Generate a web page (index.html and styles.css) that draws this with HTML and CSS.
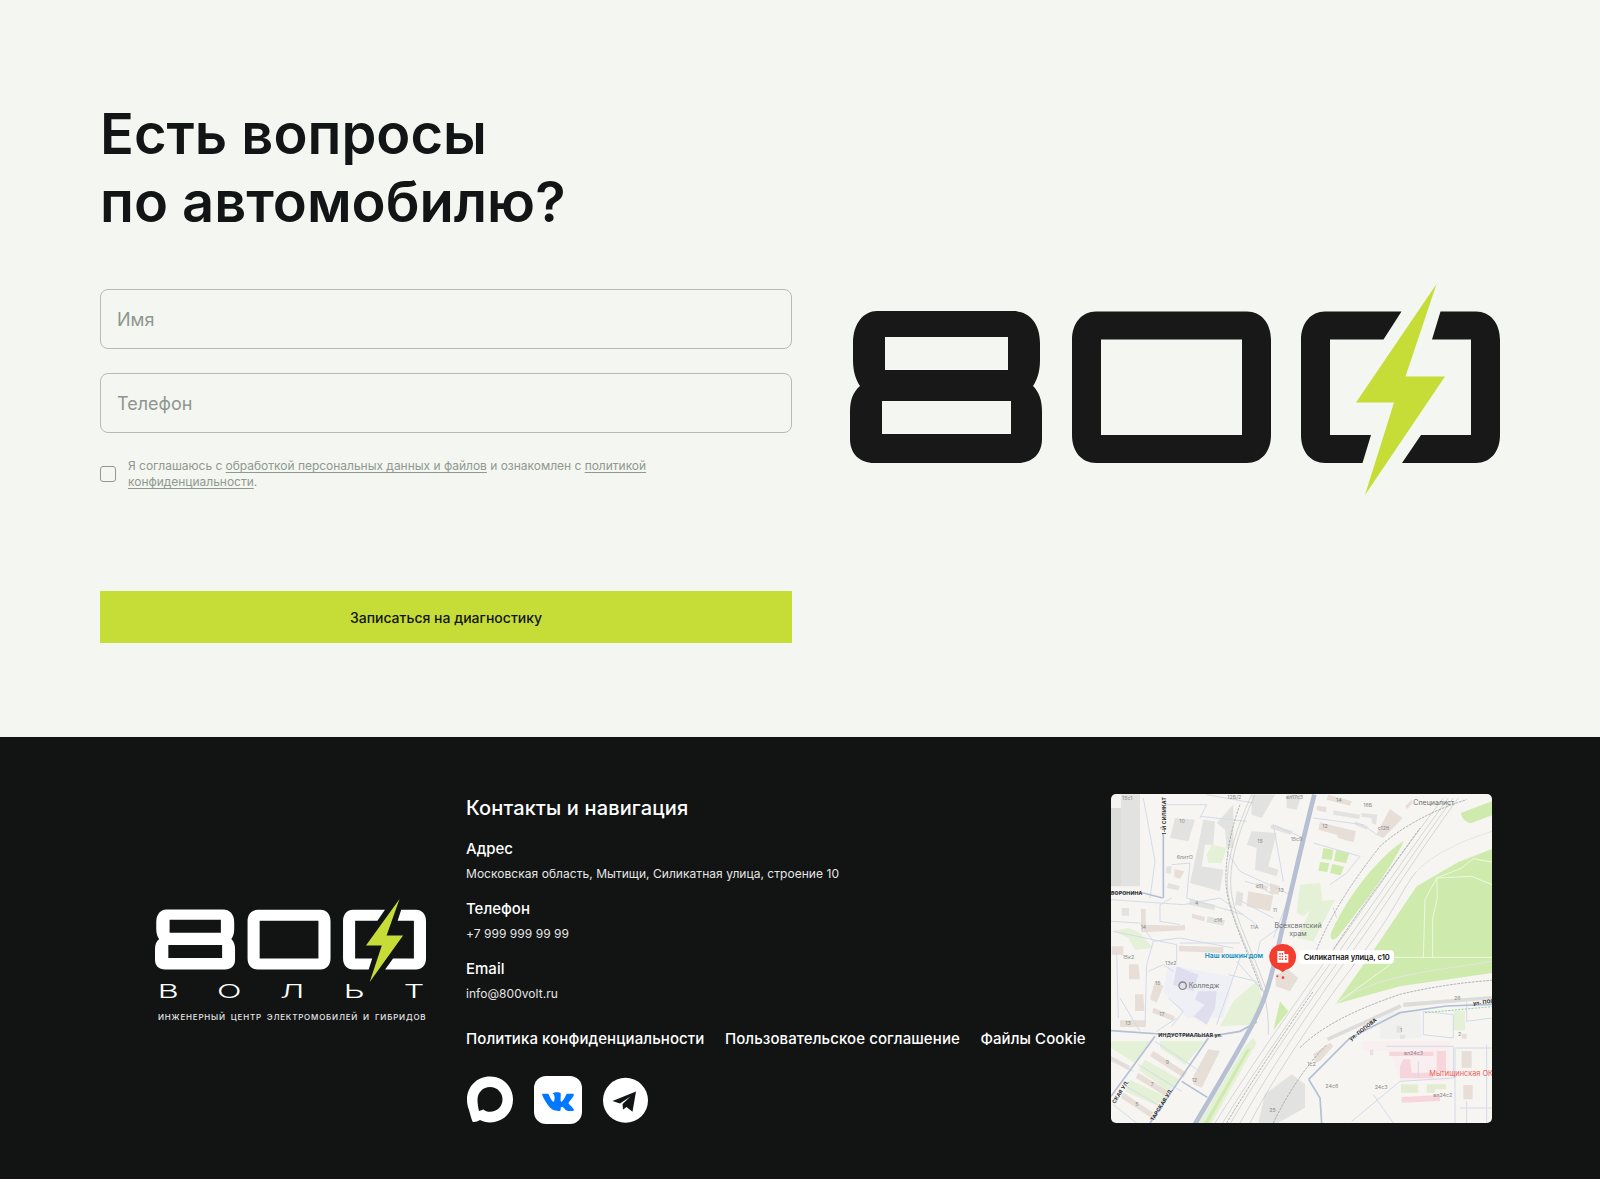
FILE: index.html
```html
<!DOCTYPE html>
<html lang="ru">
<head>
  <meta charset="UTF-8" />
  <meta name="viewport" content="width=device-width, initial-scale=1.0"/>
  <title>800 Вольт</title>
  <link rel="stylesheet" href="styles.css">
</head>
<body>

  <svg class="sprite" aria-hidden="true">
    <symbol id="logo800" viewBox="850 284 650 211" preserveAspectRatio="none">
      <path fill="currentColor" fill-rule="evenodd" d="M877 311H1013C1029 311 1040 323 1040 343V360C1040 372 1037 380 1033 386C1039 392 1042 400 1042 412V439C1042 454 1032 463 1018 463H874C860 463 850 454 850 439V412C850 400 853 392 860 386C856 380 853 372 853 360V343C853 323 864 311 877 311ZM885 337H1008V370H885ZM882 401H1011V434H882Z"/>
      <path fill="currentColor" fill-rule="evenodd" d="M1096 311.500H1247C1261 311.500 1271 323 1271 340V435C1271 452 1261 463 1247 463H1096C1082 463 1072 452 1072 435V340C1072 323 1082 311.500 1096 311.500ZM1101 339.500H1242V435H1101Z"/>
      <path fill="currentColor" d="M1325 311.500H1401.500L1383.500 339.500H1330V435H1371L1362.500 463H1325C1311 463 1301 452 1301 435V340C1301 323 1311 311.500 1325 311.500Z"/>
      <path fill="currentColor" d="M1440.500 311.500H1476C1490 311.500 1500 323 1500 340V435C1500 452 1490 463 1476 463H1402L1421 435H1471V339.500H1432Z"/>
      <path class="bolt" d="M1436.500 284L1405.500 376.500H1445L1365 495L1394 402.500H1356Z"/>
    </symbol>
  </svg>

  <section class="question">
    <div class="question-left">
      <h1>Есть вопросы<br>по автомобилю?</h1>
      <form class="form">
        <input type="text" placeholder="Имя">
        <input type="tel" placeholder="Телефон">
        <label class="agree">
          <span class="agree-box"></span>
          <span class="agree-text">Я соглашаюсь с <a href="#">обработкой персональных данных и файлов</a> и ознакомлен с <a href="#">политикой конфиденциальности</a>.</span>
        </label>
        <button type="button" class="submit-btn">Записаться на диагностику</button>
      </form>
    </div>
    <svg class="big-logo"><use href="#logo800"/></svg>
  </section>

  <footer class="footer">
    <div class="brand">
      <svg class="brand-logo"><use href="#logo800"/></svg>
      <div class="brand-word"><span>В</span><span>О</span><span>Л</span><span>Ь</span><span>Т</span></div>
      <div class="brand-tag">Инженерный центр электромобилей и гибридов</div>
    </div>

    <div class="info">
      <h3>Контакты и навигация</h3>
      <div class="info-group">
        <div class="info-label">Адрес</div>
        <div class="info-value">Московская область, Мытищи, Силикатная улица, строение 10</div>
      </div>
      <div class="info-group">
        <div class="info-label">Телефон</div>
        <div class="info-value">+7 999 999 99 99</div>
      </div>
      <div class="info-group">
        <div class="info-label">Email</div>
        <div class="info-value">info@800volt.ru</div>
      </div>
      <nav class="links">
        <a href="#">Политика конфиденциальности</a>
        <a href="#">Пользовательское соглашение</a>
        <a href="#">Файлы Cookie</a>
      </nav>
      <div class="socials">
        <svg viewBox="0 0 48 48"><path fill="#fff" fill-rule="evenodd" d="M24 .5C37 .5 47 10.500 47 23.500S37 46.500 24 46.500C20 46.500 17 45.500 14 44C11.500 45.500 7.500 46.800 6.500 45.500C5.500 43.500 4.500 39 3 34C1.500 30 1 27 1 23.500C1 10.500 11 .5 24 .5ZM24 11C17 11 11.500 16.500 11.500 23.500C11.500 27 12 31 13 35L17.500 33.500C19 35 21.500 35.800 24 35.800C31 35.800 36.500 30.500 36.500 23.500S31 11 24 11Z"/></svg>
        <svg viewBox="0 0 48 48"><rect width="48" height="48" rx="12" fill="#fff"/><path fill="#07f" transform="translate(8 9.700) scale(1.330)" d="M13.162 18.994c.609 0 .858-.406.851-.915-.031-1.917.714-2.949 2.059-1.604 1.488 1.488 1.796 2.519 3.603 2.519h3.2c.808 0 1.126-.26 1.126-.668 0-.863-1.421-2.386-2.625-3.504-1.686-1.565-1.765-1.602-.313-3.486 1.801-2.339 4.157-5.336 2.073-5.336h-3.981c-.772 0-.828.435-1.103 1.083-.995 2.347-2.886 5.387-3.604 4.922-.751-.485-.407-2.406-.35-5.261.015-.754.011-1.271-1.141-1.539-.629-.145-1.241-.205-1.809-.205-2.273 0-3.841.953-2.95 1.119 1.571.293 1.42 3.692 1.054 5.16-.638 2.556-3.036-2.024-4.035-4.305-.241-.548-.315-.974-1.175-.974h-3.255c-.492 0-.787.16-.787.516 0 .602 2.96 6.72 5.786 9.77 2.756 2.975 5.48 2.708 7.376 2.708z"/></svg>
        <svg viewBox="0 0 48 48"><circle cx="23.500" cy="24.300" r="22.500" fill="#fff"/><path fill="#121515" d="M10.500 25L34 15.500L30.500 35.800L24.500 31L21 33.500L20.500 28L28.500 20.500L18 27.500Z"/></svg>
      </div>
    </div>

    <svg class="map" viewBox="33 28 1143 987">
      <rect class="m-bg" x="33" y="28" width="1143" height="987"/>

      <!-- зелень -->
      <path class="m-green" d="M1176 193L1075 232L950 305L815 505L707 658L900 605L1176 565Z"/>
      <path class="m-green" d="M912 168C860 200 760 300 695 440C685 465 700 472 715 455C780 370 870 260 912 168Z"/>
      <path class="m-green" d="M1082 85L1176 50V92L1112 116C1095 112 1085 100 1082 85Z"/>
      <path class="m-green" d="M670 190L700 195L695 226L665 222ZM708 196L748 205L738 236L702 228ZM660 232L688 236L682 262L655 258ZM697 238L732 246L722 272L690 265Z"/>
      <path class="m-green-soft" d="M295 1015L435 785L460 760L470 775L335 1015Z"/>
      <path class="m-green" d="M312 1015L440 795L452 790L325 1015Z"/>
      <path class="m-green" d="M540 650L565 680L520 737Z"/>
      <path class="m-green-soft" d="M600 300L660 295L668 345L610 395L590 385ZM645 350L705 345L640 470L590 460Z"/>
      <path class="m-green-soft" d="M320 210L335 180L380 190L365 235L325 235Z"/>
      <path class="m-green-soft" d="M33 770H150L105 835L33 790ZM180 770H315L255 840L180 790ZM135 825L240 885L205 920L115 855ZM90 885L205 940L165 960L75 920Z"/>
      <path class="m-green-soft" d="M40 440L85 430L120 445L160 490L105 495L85 460ZM400 650L470 590L490 650L450 720L360 725Z"/>
      <path class="m-green-soft" d="M1062 679H1095V737H1062Z"/>

      <!-- кварталы -->
      <path class="m-college" d="M205 540L400 578L370 700L260 700L190 620Z"/>
      <path class="m-college2" d="M230 545L295 570L280 620L220 600ZM295 620L350 620L345 670L320 720L280 695L315 660L285 645Z"/>
      <path class="m-pink-soft" d="M790 769H1050V889H900L870 799H790Z"/>
      <path class="m-pink" d="M868 801H1000V814H868ZM1010 799H1038V859H1010ZM910 824H930L935 864H1000V881H900V844ZM905 937L1020 931V949L905 954Z"/>
      <path class="m-soft" d="M840 684L960 679L965 759L840 764Z"/>

      <!-- здания серые -->
      <path class="m-grey2" d="M33 70H63V305H33Z"/>
      <path class="m-grey" d="M63 29H120V305H63ZM225 100L285 105L265 170L210 160ZM310 105L345 110L340 180L315 180L305 245L370 255L360 320L270 295L295 180ZM350 115L400 60V190L380 190L375 135ZM455 140L530 145L505 245L535 255L530 275L465 255L470 190L440 180ZM455 30H525L485 100L455 90ZM515 120L580 140L570 150L510 130ZM560 30H605L590 75L560 70ZM270 343L345 360L343 377L267 360ZM323 395L375 407L370 423L320 413ZM200 245H215L213 267L197 265ZM205 295L240 305L235 317L200 310ZM65 370H87V393H65ZM410 320L430 325L425 365L405 360Z"/>
      <path class="m-grey" d="M700 77L780 90L778 103L700 90ZM785 85L832 90L828 120L815 115L815 100L785 97ZM765 110L805 127L800 135L765 120ZM495 929L575 869L615 899V969L535 1014H475Z"/>
      <path class="m-grey" d="M890 724H905V744H890ZM900 751H915V762H900ZM810 795H820V812H810Z"/>
      <path class="m-grey3" d="M680 759L900 659L905 669L685 769ZM910 654L1176 634V644L910 667Z"/>

      <!-- здания бежевые -->
      <path class="m-tan" d="M123 373H137V420L237 423L255 420V437L123 443ZM237 483L370 487V505L237 500ZM223 253L253 260L240 283L223 277ZM35 485H70V510H35ZM277 387L315 397L313 410L275 400ZM470 295L505 305L500 318L465 308ZM510 295L540 305L535 330L510 325ZM445 320L520 333L510 380L440 365Z"/>
      <path class="m-tan" d="M685 30L755 50L750 63L680 45ZM660 113L768 140L760 173L715 160L710 150L655 135ZM870 73L908 100L850 160L828 150ZM650 63L680 67L678 83L650 77ZM915 65L935 45L938 55L922 73Z"/>
      <path class="m-tan" d="M165 589L190 604L170 654L150 644ZM160 669L223 694L220 709L157 684ZM60 707H137V727H60ZM105 629H130L133 679H105ZM87 539H115L120 584H87ZM160 799L260 864L250 879L150 814ZM115 864L205 919L195 934L107 879ZM70 924L160 984L150 997L63 939ZM33 814L90 844L85 857L33 829ZM325 794L360 799L305 909L280 899L280 874Z"/>
      <path class="m-tan" d="M640 809L690 774L700 784L660 829L645 834ZM1085 799H1115V849H1085ZM1090 901H1118V944H1090ZM1085 747H1100V762H1085ZM527 570L565 555L595 580L570 620L527 605Z"/>
      <path class="m-green-pale" d="M903 899H955V924H903ZM980 899H1038V914H1005V924H980Z"/>

      <!-- дороги -->
      <g class="m-thin">
        <path d="M130 40L165 230L150 340M215 240L270 235L260 340L430 390M33 345L250 360L360 340L470 420M33 410L120 415L160 470L240 460L400 490M215 340L180 360V410L240 420M160 470L140 540L135 720M50 500L55 700"/>
        <path d="M200 60H320L300 100M300 95L440 110M435 290L470 300L520 330M415 345L520 400M520 120L550 290M380 200L420 260M550 420L480 470L470 520M240 475H420M40 440L230 480L230 530M145 560L190 540L220 560M120 740L60 640M230 700L170 740M320 30L460 55M410 530L490 620"/>
        <path d="M640 100L790 120L830 150M640 175L780 215L740 265L690 300M710 400L700 370M520 120L610 160M420 260L570 330L520 460"/>
        <path d="M33 820L100 860M165 770L300 860M205 640L250 680L215 725M420 520L385 620L350 720M385 570L470 590M115 840L245 920M70 900L190 970M40 960L110 1015"/>
        <path d="M860 785H1060V880M1175 790H1065V1015M970 680L1060 690V760L970 750ZM1100 650V710L1176 700M955 830V880M755 1010L900 890L1060 880M820 930L880 1015M1160 780V1015M1100 950V1015M1080 970H1176"/>
      </g>
      <g class="m-road">
        <path d="M33 325H130L188 340"/>
        <path d="M190 150V340"/>
        <path d="M33 738L180 748L330 755L420 740L470 712"/>
        <path d="M165 755L33 935"/>
        <path d="M325 760L150 1015"/>
        <path d="M245 890L322 938"/>
        <path d="M626 884L750 760L900 684L1040 664L1176 659"/>
        <path d="M626 884L660 940L665 1015"/>
      </g>

      <!-- ж/д -->
      <g class="m-rail">
        <path d="M455 30C410 130 380 220 382 300C385 390 450 500 490 620C505 670 505 720 505 750"/>
        <path d="M465 30C420 130 390 220 392 300C395 390 460 500 500 620"/>
        <path d="M345 1015C430 880 560 690 690 510S900 210 1030 40"/>
        <path d="M368 1015C450 880 580 690 710 510S920 210 1045 40"/>
        <path d="M392 1015C470 880 600 690 730 510S935 210 1060 40"/>
        <path d="M420 1015C495 880 620 690 750 510S950 210 1075 40"/>
        <path d="M450 1015C520 880 640 700 770 530S900 320 950 260"/>
      </g>
      <g class="m-rail-dark">
        <path d="M650 495C680 420 730 325 840 185C900 130 1000 75 1100 45"/>
        <path d="M600 789C660 730 750 680 900 629C1000 605 1100 592 1176 587"/>
        <path d="M690 510C760 400 860 270 960 130"/>
        <path d="M420 60C390 140 375 230 378 300C385 390 445 500 485 620"/>
        <path d="M380 1015C460 880 590 690 640 620"/>
        <path d="M520 1015C560 930 620 840 680 780"/>
      </g>
      <path class="m-white-road" d="M955 255C1000 210 1080 170 1176 140"/>
      <path class="m-white-road" d="M705 660C820 570 1000 560 1176 530"/>
      <path class="m-dash-green" d="M975 684L1176 666"/>
      <g class="m-green-line">
        <path d="M1176 300L1115 275L1010 280L975 345L970 518M1010 280L1012 340L998 400V518M820 518H1176M1176 232L1120 222L1085 250L1010 280M707 658L870 540"/>
      </g>

      <!-- шоссе -->
      <path class="m-highway" d="M643 30C610 160 580 290 545 440C530 510 510 600 485 660C460 720 420 790 285 1018"/>

      <!-- подписи -->
      <g class="m-num">
        <text x="66" y="46">15с1</text><text x="238" y="115">10</text><text x="230" y="224">6литО</text>
        <text x="382" y="44">12Б/2</text><text x="558" y="42">вл17с3</text><text x="708" y="52">14</text><text x="790" y="68">16Б</text>
        <text x="667" y="130">12</text><text x="833" y="137">с12б</text><text x="472" y="176">15</text><text x="572" y="168">15с9</text>
        <text x="468" y="311">с11</text><text x="535" y="322">13</text><text x="518" y="381">11</text><text x="285" y="362">4</text>
        <text x="342" y="412">с16</text><text x="451" y="433">11А</text><text x="122" y="432">14</text><text x="68" y="524">15к2</text>
        <text x="195" y="541">13к2</text><text x="165" y="601">15</text><text x="178" y="693">17</text><text x="76" y="722">13</text>
        <text x="197" y="839">9</text><text x="152" y="903">7</text><text x="106" y="965">5</text><text x="275" y="893">12</text>
        <text x="1062" y="646">26</text><text x="900" y="742">1</text><text x="1074" y="755">2</text><text x="622" y="843">1с2</text>
        <text x="676" y="910">24с6</text><text x="824" y="914">24с3</text><text x="912" y="812">вл24с3</text><text x="1000" y="936">вл24с2</text>
        <text x="508" y="981">25</text>
      </g>
      <g class="m-street">
        <text x="33" y="332">ВОРОНИНА</text>
        <text x="175" y="757">ИНДУСТРИАЛЬНАЯ ул.</text>
        <text x="1120" y="661" transform="rotate(-6 1120 661)">ул. ПОПОВА</text>
        <text x="753" y="769" transform="rotate(-38 753 769)">ул. ПОПОВА</text>
        <text x="198" y="150" transform="rotate(-90 198 150)">1-Й СИЛИКАТ</text>
        <text x="45" y="958" transform="rotate(-58 45 958)">СКАЯ УЛ.</text>
        <text x="160" y="1010" transform="rotate(-58 160 1010)">ТАРСКАЯ УЛ.</text>
      </g>
      <text class="m-place" x="940" y="60">Специалист</text>
      <text class="m-place" x="594" y="431" text-anchor="middle">Всехсвятский</text>
      <text class="m-place" x="594" y="454" text-anchor="middle">храм</text>
      <circle class="m-place-icon" cx="248" cy="603" r="11"/>
      <text class="m-place" x="266" y="611">Колледж</text>
      <text class="m-blue" x="314" y="519">Наш кошкин дом</text>
      <text class="m-red" x="988" y="875">Мытищинская ОКБ</text>

      <!-- метка -->
      <rect class="m-label-bg" x="596" y="497" width="286" height="40" rx="12"/>
      <text class="m-label" x="611" y="525">Силикатная улица, с10</text>
      <path class="m-pin" d="M548 478A39 39 0 0 1 558 555L548 563L538 555A39 39 0 0 1 548 478Z"/>
      <path class="m-pin-icon" fill-rule="evenodd" d="M532 499H553V508H565V534H532ZM538 505V510H542V505ZM545 505V510H549V505ZM538 513V518H542V513ZM545 513V518H549V513ZM538 521V526H542V521ZM545 521V526H549V521ZM555 513V518H560V513ZM555 521V526H560V521Z"/>
      <circle class="m-pin" cx="532" cy="575" r="3"/>
      <circle class="m-pin" cx="549" cy="579" r="4"/>
    </svg>
  </footer>

</body>
</html>
```

FILE: styles.css
```css
* {
  margin: 0;
  padding: 0;
  box-sizing: border-box;
  font-family: Inter, 'Noto Sans', sans-serif;
}

body {
  background: #f4f6f1;
  color: #121515;
}

.sprite {
  display: none;
}

.bolt {
  fill: #c6dd38;
}

/* блок с формой */

.question {
  height: 737px;
  padding: 100px 0 0 100px;
  display: flex;
  gap: 58px;
}

.question-left {
  width: 692px;
}

h1 {
  font-size: 56px;
  line-height: 68px;
  font-weight: 600;
  margin-bottom: 53px;
}

.form {
  display: flex;
  flex-direction: column;
}

.form input {
  height: 60px;
  margin-bottom: 24px;
  padding: 0 16px;
  border: 1px solid #b5bdb2;
  border-radius: 8px;
  background: transparent;
  font-size: 18px;
}

.form input::placeholder {
  color: #8f968f;
  opacity: 1;
}

.agree {
  display: flex;
  align-items: center;
  gap: 12px;
  margin-top: 1px;
}

.agree-box {
  flex: none;
  width: 16px;
  height: 16px;
  border: 1px solid #8f998f;
  border-radius: 3px;
}

.agree-text {
  font-size: 12px;
  line-height: 16px;
  color: #8f998f;
  letter-spacing: -.02px;
  max-width: 560px;
}

.agree-text a {
  color: #8f998f;
  text-decoration-thickness: 1px;
  text-underline-offset: 2px;
}

.submit-btn {
  height: 52px;
  margin-top: 101px;
  border: none;
  background: #c6dd38;
  color: #121515;
  font-size: 14px;
  font-weight: 500;
}

.big-logo {
  flex: none;
  width: 650px;
  height: 211px;
  margin-top: 184px;
  color: #181818;
}

/* подвал */

.footer {
  height: 442px;
  padding: 57px 108px 56px 155px;
  background: #111413;
  color: #fff;
  display: flex;
  align-items: center;
}

.brand {
  flex: none;
  width: 271px;
  margin: 4px 40px 0 0;
}

.brand-logo {
  display: block;
  width: 271px;
  height: 83px;
  color: #fff;
}

.brand-word {
  display: flex;
  justify-content: space-between;
  margin-top: 2px;
  padding: 0 6px 0 7px;
  font-size: 19px;
  line-height: 16px;
  font-weight: 300;
}

.brand-word span {
  transform: scaleX(1.7);
}

.brand-tag {
  margin-top: 11px;
  padding-left: 3px;
  font-size: 8px;
  line-height: 12px;
  font-weight: 500;
  letter-spacing: .8px;
  word-spacing: 2px;
  text-transform: uppercase;
  white-space: nowrap;
  color: #e8e8e8;
}

.info {
  flex: 1;
  padding-top: 2px;
}

.info h3 {
  font-size: 20px;
  line-height: 24px;
  font-weight: 500;
  letter-spacing: .15px;
  margin-bottom: 19px;
}

.info-group {
  margin-bottom: 17px;
}

.info-label {
  font-size: 15px;
  line-height: 20px;
  font-weight: 500;
  margin-bottom: 7px;
}

.info-value {
  font-size: 12px;
  line-height: 16px;
  letter-spacing: .04px;
  color: #e6e6e6;
}

.links {
  display: flex;
  gap: 20.500px;
  margin-top: 27px;
}

.links a {
  color: #fff;
  font-size: 15px;
  line-height: 20px;
  font-weight: 500;
  letter-spacing: .09px;
  text-decoration: none;
  white-space: nowrap;
}

.socials {
  display: flex;
  gap: 20px;
  margin-top: 27px;
}

.socials svg {
  display: block;
  width: 48px;
  height: 48px;
}

/* карта */

.map {
  flex: none;
  width: 381px;
  height: 329px;
  border-radius: 5px;
}

.m-bg { fill: #f6f5f2; }
.m-soft { fill: #f0f0ee; }
.m-green { fill: #cfeaad; }
.m-green-soft { fill: #e4f1d6; }
.m-green-pale { fill: #e3ecd0; }
.m-college { fill: #efeff6; }
.m-college2 { fill: #dedeee; }
.m-pink { fill: #f7d5dc; }
.m-pink-soft { fill: #faeff0; }
.m-grey { fill: #e2e2e0; }
.m-grey2 { fill: #dcdcda; }
.m-grey3 { fill: #dcdcda; }
.m-tan { fill: #e6ded7; }

.m-thin path,
.m-road path,
.m-rail path,
.m-rail-dark path,
.m-green-line path,
.m-white-road,
.m-dash-green,
.m-highway {
  fill: none;
}

.m-thin path { stroke: #d3dae8; stroke-width: 3; }
.m-road path { stroke: #b3bfd5; stroke-width: 5; }
.m-rail path { stroke: #c3c6c6; stroke-width: 2; }
.m-rail-dark path { stroke: #8d9698; stroke-width: 2; stroke-dasharray: 8 3; }
.m-green-line path { stroke: #eef8e0; stroke-width: 3; }
.m-white-road { stroke: #e4e4e2; stroke-width: 3; }
.m-dash-green { stroke: #8fd0a0; stroke-width: 3; stroke-dasharray: 6 4; }
.m-highway { stroke: #b7c0d2; stroke-width: 14; }

.m-num text { fill: #8a8a88; font-size: 16px; }
.m-street text { fill: #2b2b2b; font-size: 15.500px; font-weight: 700; letter-spacing: .5px; }
.m-place { fill: #6e6e6c; font-size: 21px; }
.m-place-icon { fill: none; stroke: #858585; stroke-width: 4; }
.m-blue { fill: #0a8ec0; font-size: 20.500px; font-weight: 600; }
.m-red { fill: #ea5c50; font-size: 22px; }
.m-label-bg { fill: #fff; }
.m-label { fill: #111; font-size: 22.800px; font-weight: 600; }
.m-pin { fill: #f43d2f; }
.m-pin-icon { fill: #fff; }
```
